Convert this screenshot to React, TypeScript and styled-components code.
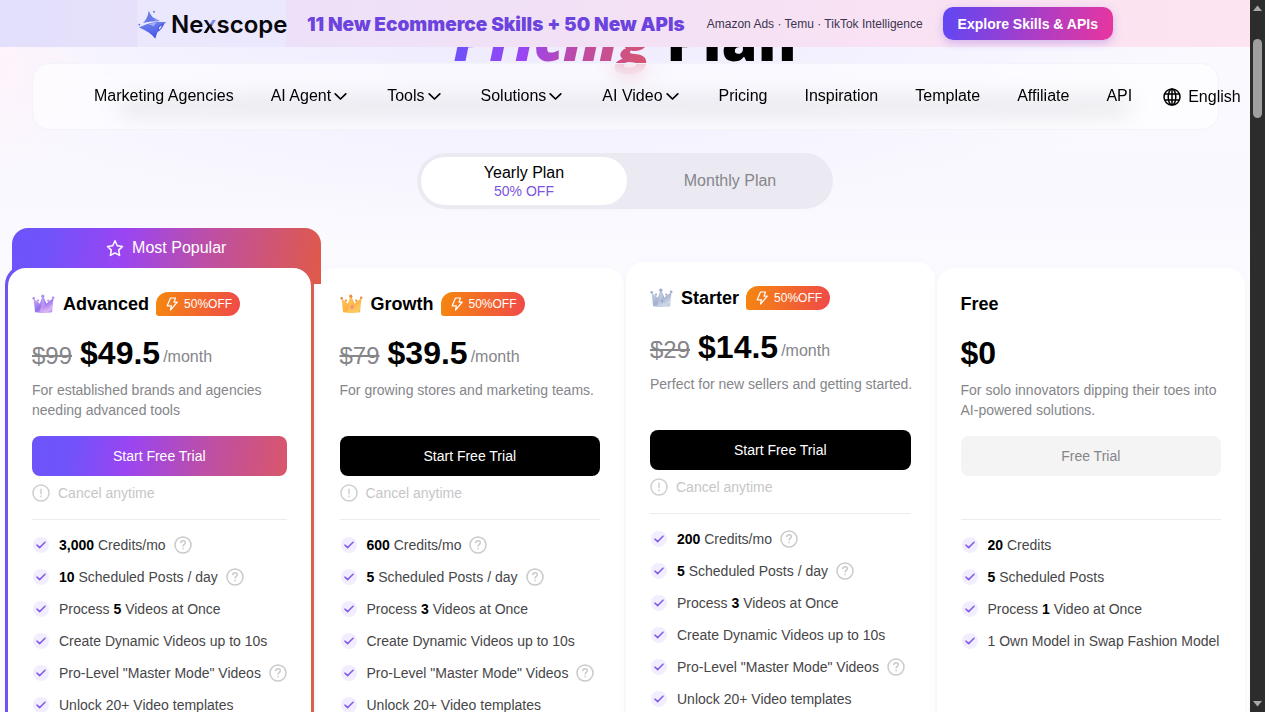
import React from "react";
import styled, { createGlobalStyle, css } from "styled-components";

const GlobalStyle = createGlobalStyle`
  *, *::before, *::after { box-sizing: border-box; }
  body {
    margin: 0;
    background: #fff;
    color: #000;
    font-family: "Liberation Sans", Arial, sans-serif;
    font-size: 16px;
  }
  h1, h2, p, ul { margin: 0; padding: 0; }
  ul { list-style: none; }
  button { font: inherit; border: 0; cursor: pointer; }
  a { color: inherit; text-decoration: none; }
  svg { display: block; flex: none; }
`;

const brand = "linear-gradient(100deg, #6c54fa 0%, #7153fa 12%, #9a45f2 36%, #bd4fa6 62%, #e05a48 100%)";
const brandSoft = "linear-gradient(100deg, #6c54fa 0%, #7153fa 16%, #9a45f2 38%, #bd4fa6 68%, #d9566a 100%)";

const Shell = styled.div`
  display: grid;
  grid-template-columns: minmax(0, 1fr) 15px;
  height: 100vh;
  overflow: hidden;
`;

const Viewport = styled.div`
  position: relative;
  overflow: hidden;
  background:
    radial-gradient(circle 110px at 0 70px, rgba(255, 243, 251, 0.9), rgba(255, 243, 251, 0) 100%),
    radial-gradient(ellipse 700px 210px at 42% 10px, rgba(236, 232, 254, 0.95), rgba(247, 245, 255, 0) 100%),
    linear-gradient(180deg, #fbfaff 0, #f9f8ff 200px, #fcfcff 300px, #fdfdfe 100%);
`;

const Header = styled.header`
  position: absolute;
  inset: 0 0 auto;
  z-index: 5;
`;

const Banner = styled.div`
  display: flex;
  align-items: center;
  height: 47px;
  padding-left: 138px;
  background: linear-gradient(90deg, #e2e0fc 0, #ede1f8 26%, #f6e1f4 60%, #fde4f0 100%);
`;

const Logo = styled.a`
  display: flex;
  align-items: center;
  gap: 4px;
  width: 148px;
  height: 100%;
  padding-top: 2px;
  background: #ebe8fe;
  font: 600 24px/28px Inter, sans-serif;
  color: #08080c;
`;

const LogoX = styled.span`
  color: transparent;
  background: linear-gradient(225deg, #7d84f4 0 44%, #08080c 52%);
  background-clip: text;
`;

const BannerTitle = styled.strong`
  margin-left: 21px;
  padding-top: 2px;
  font: 900 19px/24px Inter, sans-serif;
  color: #6c44dd;
  white-space: nowrap;
`;

const BannerNote = styled.span`
  margin-left: 22px;
  font-size: 12px;
  line-height: 16px;
  color: #3c3450;
  white-space: nowrap;
`;

const BannerButton = styled.button`
  height: 33px;
  margin-left: 20px;
  padding: 0 15px;
  border-radius: 10px;
  background: linear-gradient(100deg, #5f47f4, #e9359f);
  box-shadow: 0 3px 8px rgba(120, 70, 230, 0.3);
  color: #fff;
  font-size: 14px;
  font-weight: 700;
  white-space: nowrap;
`;

const Nav = styled.nav`
  display: flex;
  align-items: center;
  gap: 37px;
  height: 67px;
  margin: 16px 31px 0 32px;
  padding: 0 0 2px 61px;
  border: 1px solid rgba(242, 242, 249, 0.9);
  border-radius: 18px;
  background: rgba(255, 255, 255, 0.6);
  backdrop-filter: blur(10px);
  white-space: nowrap;
`;

const NavLink = styled.a<{ $menu?: boolean }>`
  display: flex;
  align-items: center;
  gap: 3px;
  padding-right: ${(p) => (p.$menu ? "3px" : "0")};
  line-height: 20px;
`;

const Language = styled.button`
  display: flex;
  align-items: center;
  gap: 7px;
  margin-left: -6px;
  padding: 2px 0 0;
  background: none;
  color: #000;
  line-height: 20px;
`;

const Main = styled.main`
  display: flex;
  flex-direction: column;
  align-items: center;
`;

const Title = styled.h1`
  height: 78px;
  font: 800 58px/78px "Open Sans", sans-serif;
  white-space: nowrap;
`;

const TitleAccent = styled.em`
  background: linear-gradient(100deg, #6754fa 0%, #9a45f2 38%, #bd4aa8 62%, #d9566a 100%);
  background-clip: text;
  color: transparent;
`;

const Haze = styled.div`
  width: 81%;
  height: 18px;
  margin-top: 19px;
  border-radius: 9px;
  background: rgba(80, 80, 95, 0.3);
  filter: blur(4px);
`;

const PlanSwitch = styled.div`
  display: flex;
  margin-top: 38px;
  padding: 4px 0 4px 4px;
  border-radius: 28px;
  background: #ebeaf2;
`;

const PlanOption = styled.button<{ $active?: boolean }>`
  display: flex;
  flex-direction: column;
  align-items: center;
  justify-content: center;
  width: 206px;
  height: 48px;
  padding: 0;
  border-radius: 24px;
  background: ${(p) => (p.$active ? "#fff" : "transparent")};
  color: ${(p) => (p.$active ? "#000" : "#86868b")};
  line-height: 20px;
`;

const PlanDiscount = styled.span`
  font-size: 14px;
  line-height: 16px;
  color: #7b54e0;
`;

const Cards = styled.section`
  display: grid;
  grid-template-columns: repeat(4, minmax(0, 1fr));
  gap: 2px;
  width: 100%;
  margin-top: 59px;
  padding: 0 5px;
`;

const featuredFrame = css`
  z-index: 1;
  margin-top: -3px;
  padding: 3px;
  background: linear-gradient(90deg, #7054f0 0 50%, #d9604f 50%);
`;

const Card = styled.article<{ $featured?: boolean; $raised?: boolean }>`
  position: relative;
  margin-top: ${(p) => (p.$raised ? "-6px" : "0")};
  border-radius: 20px;
  background: #fff;
  box-shadow: 0 0 8px rgba(90, 80, 160, 0.04);
  ${(p) => p.$featured && featuredFrame}
`;

const Ribbon = styled.div`
  position: absolute;
  inset: -37px -7px auto 7px;
  display: flex;
  justify-content: center;
  gap: 8px;
  height: 56px;
  padding-top: 10px;
  border-radius: 16px 16px 0 0;
  background: ${brand};
  color: #fff;
  line-height: 20px;
`;

const CardBody = styled.div`
  position: relative;
  min-height: 520px;
  padding: 24px;
  border-radius: 18px;
  background: #fff;
`;

const CardHead = styled.div`
  display: flex;
  align-items: center;
  height: 24px;
`;

const PlanName = styled.h2`
  font-size: 18px;
  line-height: 24px;
  svg + & { margin-left: 8px; }
`;

const Badge = styled.span`
  display: flex;
  align-items: center;
  gap: 4px;
  height: 24px;
  margin-left: 7px;
  padding: 0 8px;
  border-radius: 12px 12px 12px 3px;
  background: linear-gradient(100deg, #f5870f, #f04a48);
  color: #fff;
  font-size: 12px;
`;

const PriceRow = styled.div`
  display: flex;
  align-items: flex-end;
  height: 40px;
  margin-top: 17px;
`;

const OldPrice = styled.s`
  margin-right: 8px;
  font-size: 24px;
  line-height: 34px;
  color: #85858a;
`;

const Price = styled.strong`
  font-size: 32px;
  line-height: 40px;
`;

const Period = styled.span`
  margin-left: 3px;
  line-height: 32px;
  color: #85858a;
`;

const Description = styled.p`
  height: 40px;
  margin: 7px -8px 0 0;
  font-size: 14px;
  line-height: 20px;
  color: #85858a;
`;

const actionLooks = {
  brand: css`background: ${brandSoft}; color: #fff;`,
  dark: css`background: #000; color: #fff;`,
  muted: css`background: #f4f4f4; color: #85858a;`,
};

const Action = styled.button<{ $look: keyof typeof actionLooks }>`
  width: 100%;
  height: 40px;
  margin-top: 16px;
  border-radius: 8px;
  font-size: 14px;
  ${(p) => actionLooks[p.$look]}
`;

const CancelNote = styled.p`
  display: flex;
  align-items: center;
  gap: 8px;
  height: 20px;
  margin-top: 7px;
  font-size: 14px;
  color: #c6c6c8;
`;

const Features = styled.ul`
  display: grid;
  gap: 12px;
  margin-top: 16px;
  padding-top: 15px;
  border-top: 1px solid #ececee;
`;

const Feature = styled.li`
  display: flex;
  align-items: center;
  height: 20px;
  font-size: 14px;
  color: #464648;
  white-space: nowrap;
  b { color: #000; }
`;

const CheckDot = styled.span`
  display: grid;
  place-items: center;
  width: 16px;
  height: 16px;
  margin: 0 10px 0 1px;
  border-radius: 50%;
  background: #f3eeff;
`;

const Help = styled.button`
  margin-left: 8px;
  padding: 0;
  background: none;
  color: #cacaca;
`;

const ScrollTrack = styled.div`
  display: flex;
  flex-direction: column;
  align-items: center;
  justify-content: space-between;
  padding: 5px 0;
  background: #2c2c2c;
`;

const ScrollThumb = styled.div`
  width: 9px;
  height: 79px;
  margin: 28px 0 auto;
  border-radius: 5px;
  background: #9f9f9f;
`;

const Chevron = () => (
  <svg width="13" height="16" viewBox="0 0 13 16" fill="none" stroke="currentColor" strokeWidth="1.7" strokeLinecap="round" strokeLinejoin="round">
    <path d="M1.2 5.8l5.3 5.2 5.3-5.2" />
  </svg>
);

const Globe = () => (
  <svg width="18" height="18" viewBox="0 0 18 18" fill="none" stroke="currentColor" strokeWidth="1.5">
    <circle cx="9" cy="9" r="8" />
    <ellipse cx="9" cy="9" rx="3.8" ry="8" />
    <path d="M9 1v16M1.8 6h14.4M1.8 12h14.4" />
  </svg>
);

const LogoMark = () => (
  <svg width="29" height="30" viewBox="0 0 29 30">
    <defs>
      <linearGradient id="mark" x1="0.3" y1="0" x2="0.6" y2="1">
        <stop offset="0" stopColor="#6f86ec" />
        <stop offset="1" stopColor="#4350e6" />
      </linearGradient>
    </defs>
    <path d="M10.700.7C12.500 5 15 8.500 19.500 11.300c-5-.3-9.500.4-14.500 1.800C8 10 10.200 6 10.700.7z" fill="#6579e8" />
    <path d="M.8 17.300C6 15.500 9.500 13.500 15 12.500c5-.8 9-.6 13.500-.2C23.500 15.500 19.500 20 17.400 28.700 13.500 23.500 8 20.500.8 17.300z" fill="url(#mark)" />
    <path d="M15.500 7c2 1.800 4.300 3 7 4l-4.500.6c-1.200-1.200-2.100-2.700-2.500-4.600z" fill="#8496f0" />
    <path d="M10.500 14.400c3-1.200 5.500-1.700 8.500-1.700-1.700.9-2.600 2-3.200 3.800-1.500-1.100-3.200-1.700-5.300-2.100z" fill="#a4b1f6" />
    <path d="M20.800 16.800c1.500-1.400 3-2.200 4.600-2.600-.8 2.200-2 4.600-4.800 6.600-.4-1.500-.4-2.700.2-4z" fill="#eef0ff" stroke="#4a5be6" strokeWidth="1.200" />
    <circle cx="16" cy="1.800" r="1.100" fill="#7185ea" />
    <circle cx="1.300" cy="14.600" r=".9" fill="#5467e8" />
  </svg>
);

const crownTints = {
  violet: ["#dfb6f6", "#8f70ee", "#d873d8", "#b48cf6"],
  gold: ["#fbcb62", "#ffb040", "#e860c0", "#f08a3a"],
  silver: ["#d0d8ea", "#a3b1d0", "#8a98c0", "#9fabc9"],
};

const Crown = ({ tint }: { tint: keyof typeof crownTints }) => {
  const [light, deep, gem, tip] = crownTints[tint];
  return (
    <svg width="23" height="20" viewBox="0 0 23 20">
      <defs>
        <linearGradient id={`crown-${tint}`} x1="0" y1="0" x2="1" y2="1">
          <stop offset="0" stopColor={light} />
          <stop offset=".5" stopColor={deep} />
          <stop offset=".8" stopColor={light} />
          <stop offset="1" stopColor={deep} />
        </linearGradient>
      </defs>
      <path d="M1.500 4.500l4.700 3.700 1.600 1.500L10.300 3h1.300l2.900 6.700 1.600-1.700L21.500 4l-1.400 14.300q-8.300 1.200-17 0z" fill={`url(#crown-${tint})`} />
      <path d="M7.500 18.600L10.500 5h1l3.800 13.600z" fill={light} opacity=".55" />
      <path d="M12 10.500l1.800 2.600-1.800 2.700-1.700-2.700z" fill={gem} opacity=".6" />
      <g fill={tip}>
        <circle cx="1.700" cy="4.300" r="1.300" />
        <circle cx="10.800" cy="2.200" r="1.600" />
        <circle cx="21.200" cy="3.700" r="1.300" />
        <circle cx="6" cy="6.600" r="1.100" />
        <circle cx="16.200" cy="6.600" r="1.100" />
      </g>
    </svg>
  );
};

const Star = () => (
  <svg width="18" height="20" viewBox="0 0 18 20" fill="none" stroke="currentColor" strokeWidth="1.500" strokeLinejoin="round">
    <path d="M9 2.800l2.300 4.900 5.200.7-3.800 3.700.9 5.300L9 14.900l-4.600 2.500.9-5.300L1.500 8.400l5.200-.7z" />
  </svg>
);

const Bolt = () => (
  <svg width="16" height="16" viewBox="0 0 16 16" fill="none" stroke="currentColor" strokeWidth="1.200" strokeLinejoin="round">
    <path d="M6.500 2h5L10 6.200h3.300L6.500 14l.9-4.200H3.200z" />
  </svg>
);

const Check = () => (
  <svg width="10" height="8" viewBox="0 0 10 8" fill="none" stroke="#8460e8" strokeWidth="1.600" strokeLinecap="round" strokeLinejoin="round">
    <path d="M1 4.200l2.600 2.400L9 1.200" />
  </svg>
);

const Exclaim = () => (
  <svg width="18" height="18" viewBox="0 0 18 18" fill="none" stroke="#cfcfcf" strokeWidth="1.500">
    <circle cx="9" cy="9" r="8" />
    <path d="M9 4.800v5.400M9 11.600v1.600" />
  </svg>
);

const Question = () => (
  <svg width="18" height="18" viewBox="0 0 18 18" fill="none" stroke="currentColor" strokeWidth="1.500">
    <circle cx="9" cy="9" r="8" />
    <path d="M6.700 7.100c.1-1.500 1-2.300 2.300-2.300s2.300.8 2.300 2c0 1.500-2.200 1.700-2.200 3.600M9.100 11.800v1.500" />
  </svg>
);

const Arrow = ({ down }: { down?: boolean }) => (
  <svg width="9" height="6" viewBox="0 0 9 6" fill="#a8a8a8">
    <path d={down ? "M0 0h9L4.500 5.500z" : "M0 6h9L4.500.5z"} />
  </svg>
);

const navItems = [
  { label: "Marketing Agencies" },
  { label: "AI Agent", menu: true },
  { label: "Tools", menu: true },
  { label: "Solutions", menu: true },
  { label: "AI Video", menu: true },
  { label: "Pricing" },
  { label: "Inspiration" },
  { label: "Template" },
  { label: "Affiliate" },
  { label: "API" },
];

type FeatureItem = { before?: string; value?: string; after: string; help?: boolean };

const paidFeatures = (credits: string, posts: string, videos: string): FeatureItem[] => [
  { value: credits, after: " Credits/mo", help: true },
  { value: posts, after: " Scheduled Posts / day", help: true },
  { before: "Process ", value: videos, after: " Videos at Once" },
  { after: "Create Dynamic Videos up to 10s" },
  { after: "Pro-Level \"Master Mode\" Videos", help: true },
  { after: "Unlock 20+ Video templates" },
];

type Plan = {
  name: string;
  tint?: keyof typeof crownTints;
  oldPrice?: string;
  price: string;
  text: string;
  action: string;
  look: keyof typeof actionLooks;
  featured?: boolean;
  raised?: boolean;
  features: FeatureItem[];
};

const plans: Plan[] = [
  {
    name: "Advanced", tint: "violet", oldPrice: "$99", price: "$49.5", featured: true,
    text: "For established brands and agencies needing advanced tools",
    action: "Start Free Trial", look: "brand", features: paidFeatures("3,000", "10", "5"),
  },
  {
    name: "Growth", tint: "gold", oldPrice: "$79", price: "$39.5",
    text: "For growing stores and marketing teams.",
    action: "Start Free Trial", look: "dark", features: paidFeatures("600", "5", "3"),
  },
  {
    name: "Starter", tint: "silver", oldPrice: "$29", price: "$14.5", raised: true,
    text: "Perfect for new sellers and getting started.",
    action: "Start Free Trial", look: "dark", features: paidFeatures("200", "5", "3"),
  },
  {
    name: "Free", price: "$0",
    text: "For solo innovators dipping their toes into AI-powered solutions.",
    action: "Free Trial", look: "muted",
    features: [
      { value: "20", after: " Credits" },
      { value: "5", after: " Scheduled Posts" },
      { before: "Process ", value: "1", after: " Video at Once" },
      { after: "1 Own Model in Swap Fashion Model" },
    ],
  },
];

const PlanCard = ({ plan }: { plan: Plan }) => (
  <Card $featured={plan.featured} $raised={plan.raised}>
    {plan.featured && <Ribbon><Star />Most Popular</Ribbon>}
    <CardBody>
      <CardHead>
        {plan.tint && <Crown tint={plan.tint} />}
        <PlanName>{plan.name}</PlanName>
        {plan.oldPrice && <Badge><Bolt />50%OFF</Badge>}
      </CardHead>
      <PriceRow>
        {plan.oldPrice && <OldPrice>{plan.oldPrice}</OldPrice>}
        <Price>{plan.price}</Price>
        {plan.oldPrice && <Period>/month</Period>}
      </PriceRow>
      <Description>{plan.text}</Description>
      <Action type="button" $look={plan.look}>{plan.action}</Action>
      <CancelNote>{plan.oldPrice && <><Exclaim />Cancel anytime</>}</CancelNote>
      <Features>
        {plan.features.map((f) => (
          <Feature key={f.after}>
            <CheckDot><Check /></CheckDot>
            <span>{f.before}{f.value && <b>{f.value}</b>}{f.after}</span>
            {f.help && <Help type="button" aria-label="More information"><Question /></Help>}
          </Feature>
        ))}
      </Features>
    </CardBody>
  </Card>
);

export default function App() {
  return (
    <>
      <GlobalStyle />
      <Shell>
        <Viewport>
          <Header>
            <Banner>
              <Logo href="#"><LogoMark /><span>Ne<LogoX>x</LogoX>scope</span></Logo>
              <BannerTitle>11 New Ecommerce Skills + 50 New APIs</BannerTitle>
              <BannerNote>Amazon Ads · Temu · TikTok Intelligence</BannerNote>
              <BannerButton type="button">Explore Skills &amp; APIs</BannerButton>
            </Banner>
            <Nav>
              {navItems.map((item) => (
                <NavLink key={item.label} href="#" $menu={item.menu}>{item.label}{item.menu && <Chevron />}</NavLink>
              ))}
              <Language type="button"><Globe />English</Language>
            </Nav>
          </Header>
          <Main>
            <Title><TitleAccent>Pricing</TitleAccent> Plan</Title>
            <Haze />
            <PlanSwitch>
              <PlanOption type="button" $active>Yearly Plan<PlanDiscount>50% OFF</PlanDiscount></PlanOption>
              <PlanOption type="button">Monthly Plan</PlanOption>
            </PlanSwitch>
            <Cards>
              {plans.map((plan) => <PlanCard key={plan.name} plan={plan} />)}
            </Cards>
          </Main>
        </Viewport>
        <ScrollTrack>
          <Arrow />
          <ScrollThumb />
          <Arrow down />
        </ScrollTrack>
      </Shell>
    </>
  );
}
